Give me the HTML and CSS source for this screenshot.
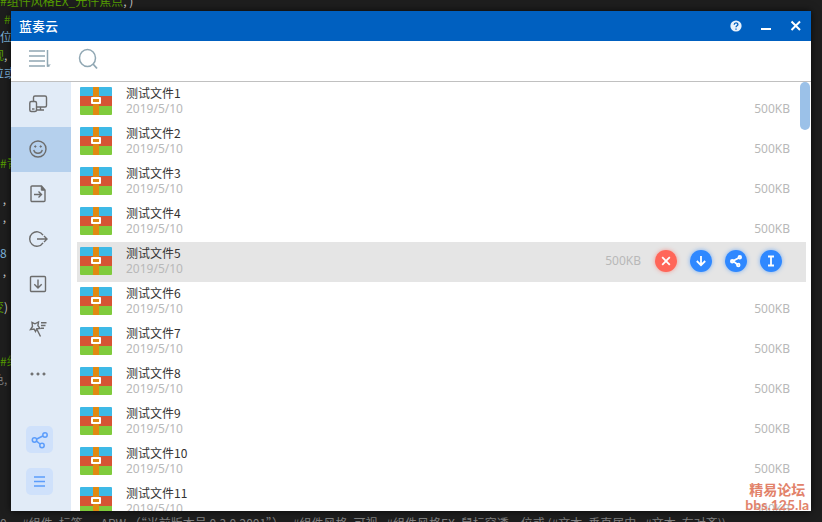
FILE: index.html
```html
<!DOCTYPE html>
<html lang="zh-CN">
<head>
    <meta charset="UTF-8">
    <title>蓝奏云</title>
    <link rel="stylesheet" href="styles.css">
</head>
<body>
    <!-- Icons -->
    <svg class="sprite" aria-hidden="true">
        <symbol id="archive" viewBox="0 0 32 28">
            <path fill="#3eb9e6" d="M1 0h30a1 1 0 0 1 1 1v8H0V1a1 1 0 0 1 1-1z"/>
            <path fill="#d65434" d="M0 9h32v10H0z"/>
            <path fill="#80cb3c" d="M0 19h32v8a1 1 0 0 1-1 1H1a1 1 0 0 1-1-1z"/>
            <path fill="#e08a12" d="M13 0h6v28h-6z"/>
            <path fill="#fff" d="M12 10h8a1 1 0 0 1 1 1v5a1 1 0 0 1-1 1h-8a1 1 0 0 1-1-1v-5a1 1 0 0 1 1-1z"/>
            <path fill="#e08a12" d="M13 12h6v3h-6z"/>
        </symbol>
        <symbol id="share" viewBox="0 0 18 18">
            <g fill="none" stroke="currentColor" stroke-width="1.5">
                <circle cx="3.5" cy="9" r="2.2"/>
                <circle cx="14" cy="4" r="2.2"/>
                <circle cx="11" cy="14.5" r="2.2"/>
                <path d="M5.8 8 11.8 5M5.5 10.2l3.6 2.8"/>
            </g>
        </symbol>
    </svg>

    <!-- Editor behind the window -->
    <div class="editor">
        <p class="green">#组件风格EX_元件焦点<i>, )</i></p>
        <p class="green cut">　#</p>
        <p class="blue">位</p>
        <p class="green cut">观<i>,</i></p>
        <p class="blue cut">位或</p>
        <p></p>
        <p></p>
        <p></p>
        <p></p>
        <p class="green">#青</p>
        <p></p>
        <p><i>&nbsp;,</i></p>
        <p><i>&nbsp;,</i></p>
        <p></p>
        <p class="blue">8</p>
        <p><i>&nbsp;,</i></p>
        <p></p>
        <p class="green cut">变<i>)</i></p>
        <p></p>
        <p></p>
        <p class="green">#组</p>
        <p class="cut">色,</p>
        <p></p>
        <p></p>
        <p></p>
        <p></p>
        <p></p>
        <p></p>
        <p></p>
        <p>0,　#组件. 标签．　APW （“当前版本号 0.3.0.2001”）,&nbsp; #组件风格. 可视,&nbsp; #组件风格EX. 鼠标穿透．位或 (#文本. 垂直居中,&nbsp; #文本. 右对齐))</p>
    </div>

    <div class="window">
        <header class="titlebar">
            <h1>蓝奏云</h1>
            <button aria-label="帮助">
                <svg width="12" height="12" viewBox="0 0 12 12"><circle cx="6" cy="6" r="5.6" fill="#e9f2fb"/><path d="M4.2 4.700c0-2.400 3.700-2.300 3.700-.2C7.900 5.800 6 5.800 6 7.300M6 8.400v1.300" fill="none" stroke="#0060c0" stroke-width="1.3"/></svg>
            </button>
            <button aria-label="最小化">
                <svg width="12" height="12" viewBox="0 0 12 12"><path d="M1 9h10" stroke="#fff" stroke-width="2"/></svg>
            </button>
            <button aria-label="关闭">
                <svg width="12" height="12" viewBox="0 0 12 12"><path d="m1.500 1.500 8.500 8.500M10 1.500 1.500 10" stroke="#fff" stroke-width="2"/></svg>
            </button>
        </header>

        <div class="toolbar">
            <button aria-label="排序">
                <svg width="22" height="20" viewBox="0 0 22 20"><path d="M0 2h16M0 7h16M0 12h16M0 17h16M18.500 1v16h2" fill="none" stroke="currentColor" stroke-width="1.5"/><path d="M18 15.500h4L18.500 18z" fill="currentColor"/></svg>
            </button>
            <button aria-label="搜索">
                <svg width="22" height="22" viewBox="0 0 22 22"><ellipse cx="9.500" cy="10" rx="8" ry="8.500" fill="none" stroke="currentColor" stroke-width="1.500"/><path d="m15 16 4 4.500" stroke="currentColor" stroke-width="1.800"/></svg>
            </button>
        </div>

        <div class="main">
            <nav class="sidebar">
                <button class="nav-item" aria-label="设备">
                    <svg width="20" height="20" viewBox="0 0 20 20"><path d="M5.500 7V3.500a1.500 1.500 0 0 1 1.500-1.500h10a1.500 1.500 0 0 1 1.500 1.500v8a1.500 1.500 0 0 1-1.500 1.500H9M12.500 13v3M9 16h7"/><rect x="1.800" y="7.500" width="6.700" height="10" rx="1.500"/><path d="M4 15h2.500"/></svg>
                </button>
                <button class="nav-item active" aria-label="表情">
                    <svg width="20" height="20" viewBox="0 0 20 20"><circle cx="10" cy="10" r="8"/><path d="M5.800 10.800c.8 4.500 7.600 4.500 8.400 0"/><circle class="dot" cx="7.300" cy="7.500" r=".7"/><circle class="dot" cx="12.700" cy="7.500" r=".7"/></svg>
                </button>
                <button class="nav-item" aria-label="移动文件">
                    <svg width="20" height="20" viewBox="0 0 20 20"><path d="M4 2h9.500l3.500 4v10.500a1 1 0 0 1-1 1H4a1 1 0 0 1-1-1V3a1 1 0 0 1 1-1zM6 10.500h7.500M10.500 7.500l3 3-3 3"/><path class="dot" d="M13.300 2.500v3.700h3.500z"/></svg>
                </button>
                <button class="nav-item" aria-label="退出">
                    <svg width="20" height="20" viewBox="0 0 20 20"><path d="M15 6.200A7.200 7.200 0 1 0 15 13.800M9 10h10M16 7l3 3-3 3"/></svg>
                </button>
                <button class="nav-item" aria-label="下载">
                    <svg width="20" height="20" viewBox="0 0 20 20"><rect x="2.500" y="2.500" width="15" height="15" rx="1"/><path d="M10 5.500v8.300M6.300 10.300 10 14l3.700-3.700"/></svg>
                </button>
                <button class="nav-item" aria-label="工具">
                    <svg width="20" height="20" viewBox="0 0 20 20"><path d="m4 3.500 3 1.300 3.500-1.800-.6 3.600L12 9.500l-3.200.2-1.300 2.800-1.500-2.500-3.500.6 2-3.100zM9 10.500l3.500 7M13 3.700h5.500M13 6.500h4.500M13 9.300h3"/></svg>
                </button>
                <button class="nav-item" aria-label="更多">
                    <svg width="20" height="20" viewBox="0 0 20 20"><circle class="dot" cx="4" cy="10" r="1.100"/><circle class="dot" cx="10" cy="10" r="1.100"/><circle class="dot" cx="16" cy="10" r="1.100"/></svg>
                </button>
                <div class="shortcuts">
                    <button aria-label="分享"><svg width="18" height="18"><use href="#share"/></svg></button>
                    <button aria-label="菜单">
                        <svg width="13" height="13" viewBox="0 0 13 13"><path d="M1 2h11M1 6.500h11M1 11h11" stroke="currentColor" stroke-width="1.600"/></svg>
                    </button>
                </div>
            </nav>

            <ul class="file-list">
                <li class="file">
                    <svg class="file-icon"><use href="#archive"/></svg>
                    <div class="info"><b>测试文件1</b><time>2019/5/10</time></div>
                    <span class="size">500KB</span>
                </li>
                <li class="file">
                    <svg class="file-icon"><use href="#archive"/></svg>
                    <div class="info"><b>测试文件2</b><time>2019/5/10</time></div>
                    <span class="size">500KB</span>
                </li>
                <li class="file">
                    <svg class="file-icon"><use href="#archive"/></svg>
                    <div class="info"><b>测试文件3</b><time>2019/5/10</time></div>
                    <span class="size">500KB</span>
                </li>
                <li class="file">
                    <svg class="file-icon"><use href="#archive"/></svg>
                    <div class="info"><b>测试文件4</b><time>2019/5/10</time></div>
                    <span class="size">500KB</span>
                </li>
                <li class="file selected">
                    <svg class="file-icon"><use href="#archive"/></svg>
                    <div class="info"><b>测试文件5</b><time>2019/5/10</time></div>
                    <span class="size">500KB</span>
                    <div class="actions">
                        <button class="delete-btn" aria-label="删除">
                            <svg width="14" height="14" viewBox="0 0 14 14"><path d="m3.200 3.200 7.600 7.600M10.800 3.200l-7.600 7.600"/></svg>
                        </button>
                        <button aria-label="下载">
                            <svg width="14" height="14" viewBox="0 0 14 14"><path d="M7 2v9M2.800 7 7 11.200 11.200 7"/></svg>
                        </button>
                        <button aria-label="分享">
                            <svg width="14" height="14" viewBox="0 0 14 14"><path d="m10.500 3.500-6.500 3.500 4.500 3.500"/><circle cx="10.800" cy="3.300" r="1.300"/><circle cx="3.200" cy="7.300" r="1.300"/><circle cx="9.300" cy="11" r="1.300"/></svg>
                        </button>
                        <button aria-label="重命名">
                            <svg width="14" height="14" viewBox="0 0 14 14"><path d="M4 2.500h6M7 2.500v9M4 11.500h6"/></svg>
                        </button>
                    </div>
                </li>
                <li class="file">
                    <svg class="file-icon"><use href="#archive"/></svg>
                    <div class="info"><b>测试文件6</b><time>2019/5/10</time></div>
                    <span class="size">500KB</span>
                </li>
                <li class="file">
                    <svg class="file-icon"><use href="#archive"/></svg>
                    <div class="info"><b>测试文件7</b><time>2019/5/10</time></div>
                    <span class="size">500KB</span>
                </li>
                <li class="file">
                    <svg class="file-icon"><use href="#archive"/></svg>
                    <div class="info"><b>测试文件8</b><time>2019/5/10</time></div>
                    <span class="size">500KB</span>
                </li>
                <li class="file">
                    <svg class="file-icon"><use href="#archive"/></svg>
                    <div class="info"><b>测试文件9</b><time>2019/5/10</time></div>
                    <span class="size">500KB</span>
                </li>
                <li class="file">
                    <svg class="file-icon"><use href="#archive"/></svg>
                    <div class="info"><b>测试文件10</b><time>2019/5/10</time></div>
                    <span class="size">500KB</span>
                </li>
                <li class="file">
                    <svg class="file-icon"><use href="#archive"/></svg>
                    <div class="info"><b>测试文件11</b><time>2019/5/10</time></div>
                    <span class="size">500KB</span>
                </li>
            </ul>
            <div class="scroll-thumb"></div>
        </div>
    </div>

    <div class="watermark"><span>精易论坛</span><span class="site">bbs.125.la</span></div>
</body>
</html>
```
FILE: styles.css
```css
* {
    box-sizing: border-box;
}
body {
    position: relative;
    display: flex;
    height: 100vh;
    margin: 0;
    padding: 11px;
    overflow: hidden;
    background-color: #1e1e1e;
    font-family: "Noto Sans CJK SC", "Noto Sans", sans-serif;
    font-size: 12px;
    color: #333;
}
button {
    display: flex;
    align-items: center;
    justify-content: center;
    padding: 0;
    border: none;
    background: none;
    color: inherit;
    cursor: pointer;
}
.sprite {
    position: absolute;
    width: 0;
    height: 0;
}

/* editor */
.editor {
    position: absolute;
    top: -8px;
    left: 0;
    color: #808080;
    white-space: nowrap;
}
.editor p {
    height: 18px;
    margin: 0;
    line-height: 18px;
}
.editor i {
    font-style: normal;
    color: #c8c8c8;
}
.editor .green {
    color: #57a000;
}
.editor .blue {
    color: #7fb4dc;
}
.editor .cut {
    margin-left: -8px;
}

/* window */
.window {
    position: relative;
    display: flex;
    flex: 1;
    flex-direction: column;
    min-width: 0;
    background-color: #fff;
    box-shadow: 0 0 8px rgba(0,0,0,0.7);
}
.titlebar {
    display: flex;
    flex: none;
    align-items: center;
    gap: 18px;
    height: 30px;
    padding: 0 9px 0 8px;
    background-color: #0060c0;
    color: #fff;
}
.titlebar h1 {
    flex: 1;
    margin: 0;
    padding-bottom: 2px;
    font-size: 13px;
    font-weight: 500;
}
.toolbar {
    display: flex;
    flex: none;
    align-items: center;
    gap: 27px;
    height: 41px;
    padding: 0 18px 4px;
    border-bottom: 1px solid #c0c0c0;
    color: #90a7b3;
}
.main {
    position: relative;
    display: flex;
    flex: 1;
    min-height: 0;
}

/* sidebar */
.sidebar {
    display: flex;
    flex: none;
    flex-direction: column;
    width: 60px;
    background-color: #e1ebf7;
}
.nav-item {
    height: 45px;
    padding: 0 6px 1px 0;
}
.nav-item.active {
    background-color: #b5d0ed;
}
.nav-item svg {
    fill: none;
    stroke: #6c6c6c;
    stroke-width: 1.4;
}
.nav-item .dot {
    fill: #6c6c6c;
    stroke-width: 1;
}
.shortcuts {
    display: flex;
    flex-direction: column;
    gap: 15px;
    margin-top: auto;
    padding: 0 15px 16px;
}
.shortcuts button {
    width: 27px;
    height: 27px;
    border-radius: 5px;
    background-color: #cfe1fb;
    color: #5c9dfb;
}

/* file list */
.file-list {
    flex: 1;
    margin: 0;
    padding: 0 5px 0 6px;
    overflow: hidden;
    list-style: none;
}
.file {
    display: flex;
    gap: 14px;
    height: 40px;
    padding: 3px 16px 6px 3px;
}
.file.selected {
    padding-right: 24px;
    background-color: #e5e5e5;
}
.file-icon {
    width: 32px;
    height: 28px;
    margin-top: 2px;
}
.info {
    display: flex;
    flex: 1;
    flex-direction: column;
    justify-content: space-between;
    line-height: 15px;
}
.info b {
    font-weight: 400;
}
.info time, .size {
    font-family: "Noto Sans", sans-serif;
    color: #b8b8b8;
}
.size {
    align-self: flex-end;
    line-height: 15px;
}
.selected .size {
    align-self: center;
}
.actions {
    display: flex;
    align-items: center;
    gap: 13px;
}
.actions button {
    width: 22px;
    height: 22px;
    border-radius: 50%;
    background-color: #2f88ff;
    box-shadow: 0 0 4px rgba(47,136,255,0.6);
}
.actions .delete-btn {
    background-color: #ff6659;
    box-shadow: 0 0 4px rgba(255,102,89,0.6);
}
.actions svg {
    fill: none;
    stroke: #fff;
    stroke-width: 1.8;
}
.scroll-thumb {
    position: absolute;
    top: 0;
    right: 1px;
    width: 10px;
    height: 48px;
    border-radius: 5px;
    background-color: #9bc1e8;
}
.watermark {
    position: absolute;
    right: 13px;
    bottom: 10px;
    display: flex;
    flex-direction: column;
    align-items: center;
    color: #e2826a;
    font-size: 14px;
    font-weight: 700;
    line-height: 15px;
}
.watermark .site {
    font-family: Lato, sans-serif;
}
```
